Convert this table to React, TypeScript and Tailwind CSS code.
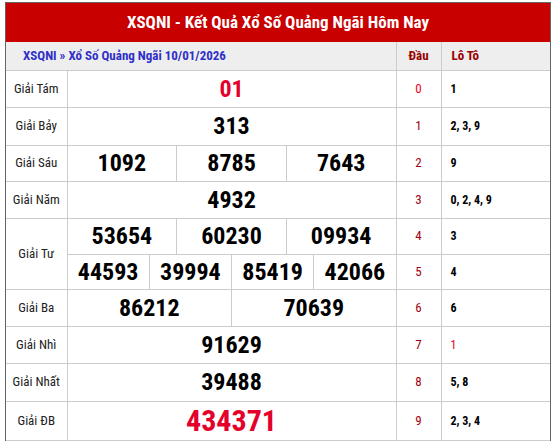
import React from "react";

type Row = {
  label: string;
  nums: string[][];
  big?: boolean;
  red?: boolean;
};

const rows: Row[] = [
  { label: "Giải Tám", nums: [["01"]], red: true },
  { label: "Giải Bảy", nums: [["313"]] },
  { label: "Giải Sáu", nums: [["1092", "8785", "7643"]] },
  { label: "Giải Năm", nums: [["4932"]] },
  { label: "Giải Tư", nums: [["53654", "60230", "09934"], ["44593", "39994", "85419", "42066"]] },
  { label: "Giải Ba", nums: [["86212", "70639"]] },
  { label: "Giải Nhì", nums: [["91629"]] },
  { label: "Giải Nhất", nums: [["39488"]] },
  { label: "Giải ĐB", nums: [["434371"]], red: true, big: true },
];

const loto: { v: string; red?: boolean }[] = [
  { v: "1" },
  { v: "2, 3, 9" },
  { v: "9" },
  { v: "0, 2, 4, 9" },
  { v: "3" },
  { v: "4" },
  { v: "6" },
  { v: "1", red: true },
  { v: "5, 8" },
  { v: "2, 3, 4" },
];

const heights = [37, 38, 36, 37, 36, 35, 37, 37, 38, 39];

export default function App() {
  const font = { fontFamily: '"Roboto Condensed", Roboto, "Liberation Sans", sans-serif' };
  const trs: React.ReactNode[] = [];
  let idx = 0;
  rows.forEach((r) => {
    r.nums.forEach((line, li) => {
      const i = idx;
      idx++;
      trs.push(
        <tr key={i} style={{ height: heights[i] }} className="border-b border-[#cccccc]">
          {li === 0 && (
            <td rowSpan={r.nums.length} className="border-r border-[#cccccc] text-center text-[13px] text-[#222]">
              {r.label}
            </td>
          )}
          <td className="p-0 border-r border-[#cccccc]">
            <div className="flex h-full divide-x divide-[#cccccc]" style={{ height: heights[i] - 1 }}>
              {line.map((n) => (
                <div
                  key={n}
                  className={`flex-1 flex items-center justify-center font-bold ${r.big ? "text-[30px]" : "text-[24px]"} ${r.red ? "text-[#e4002b]" : "text-black"}`}
                >
                  {n}
                </div>
              ))}
            </div>
          </td>
          <td className={`border-r border-[#cccccc] text-center text-[13px] ${i === 0 ? "text-[#ee0022]" : "text-[#a30012]"}`}>{i}</td>
          <td className={`pl-[9px] text-[12px] ${loto[i].red ? "text-[#ee0022]" : "font-bold text-black"}`}>{loto[i].v}</td>
        </tr>
      );
    });
  });

  return (
    <div className="w-[552px] h-[444px] bg-white overflow-hidden" style={font}>
      <div className="ml-[5px] mt-[2px] w-[546px] border-l border-r border-t border-[#666666]">
        <div className="h-[39px] bg-[#c80000] flex items-center justify-center text-white font-bold text-[17px]">
          XSQNI - Kết Quả Xổ Số Quảng Ngãi Hôm Nay
        </div>
        <table className="w-full border-collapse table-fixed">
          <colgroup>
            <col style={{ width: 61 }} />
            <col style={{ width: 329 }} />
            <col style={{ width: 45 }} />
            <col />
          </colgroup>
          <thead>
            <tr className="h-[28px] bg-[#eeeeee] border-b border-[#cccccc]">
              <th colSpan={2} className="text-left pl-[17px] border-r border-[#cccccc] text-[13px] font-bold text-[#3030c8]">
                XSQNI » Xổ Số Quảng Ngãi 10/01/2026
              </th>
              <th className="border-r border-[#cccccc] text-[13px] font-bold text-[#990000]">Đầu</th>
              <th className="text-left pl-[10px] text-[13px] font-bold text-[#990000]">Lô Tô</th>
            </tr>
          </thead>
          <tbody>{trs}</tbody>
        </table>
      </div>
    </div>
  );
}
